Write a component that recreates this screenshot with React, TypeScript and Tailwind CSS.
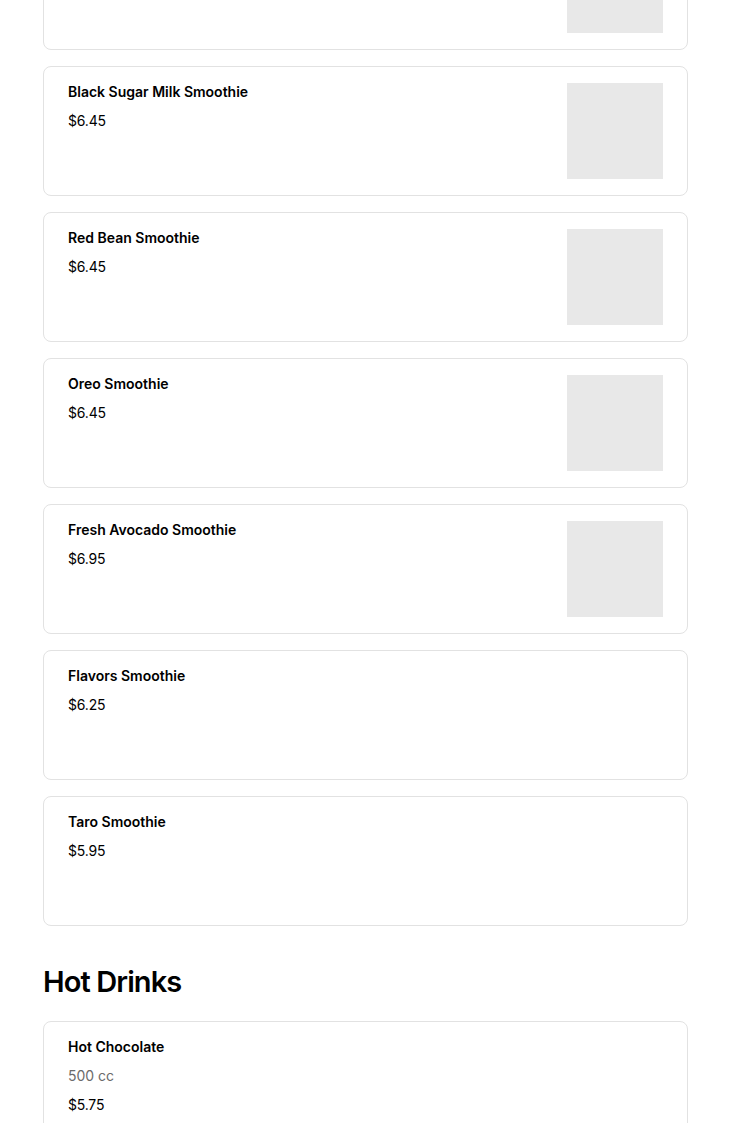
type Item = { name: string; price: string; note?: string; image?: boolean };

const smoothies: Item[] = [
  { name: "", price: "", image: true },
  { name: "Black Sugar Milk Smoothie", price: "$6.45", image: true },
  { name: "Red Bean Smoothie", price: "$6.45", image: true },
  { name: "Oreo Smoothie", price: "$6.45", image: true },
  { name: "Fresh Avocado Smoothie", price: "$6.95", image: true },
  { name: "Flavors Smoothie", price: "$6.25" },
  { name: "Taro Smoothie", price: "$5.95" },
];

const hotDrinks: Item[] = [
  { name: "Hot Chocolate", note: "500 cc", price: "$5.75" },
];

function ItemCard({ item }: { item: Item }) {
  return (
    <div className="flex h-[130px] items-start justify-between rounded-lg border border-[#e2e2e2] bg-white py-4 pl-6 pr-6">
      <div className="flex flex-col pt-[1px]">
        {item.name && (
          <div className="text-[14px] font-semibold leading-4 text-black">{item.name}</div>
        )}
        {item.note && (
          <div className="mt-[13px] text-[14px] leading-4 text-[#6b6b6b]">{item.note}</div>
        )}
        {item.price && (
          <div className="mt-[13px] text-[14px] leading-4 tracking-[-0.2px] text-black">
            {item.price}
          </div>
        )}
      </div>
      {item.image && <div className="h-24 w-24 shrink-0 bg-[#e8e8e8]" />}
    </div>
  );
}

export default function App() {
  return (
    <div
      className="min-h-screen overflow-hidden bg-white"
      style={{ fontFamily: "Inter, 'Liberation Sans', sans-serif" }}
    >
      <div className="mx-[43px] -mt-[80px] w-[645px]">
        <div className="flex flex-col gap-4">
          {smoothies.map((s, i) => (
            <ItemCard key={i} item={s} />
          ))}
        </div>
        <h2 className="mt-[38px] text-[29px] font-semibold leading-9 tracking-[-0.9px] text-black">
          Hot Drinks
        </h2>
        <div className="mt-[21px] flex flex-col gap-4">
          {hotDrinks.map((s) => (
            <ItemCard key={s.name} item={s} />
          ))}
        </div>
      </div>
    </div>
  );
}
